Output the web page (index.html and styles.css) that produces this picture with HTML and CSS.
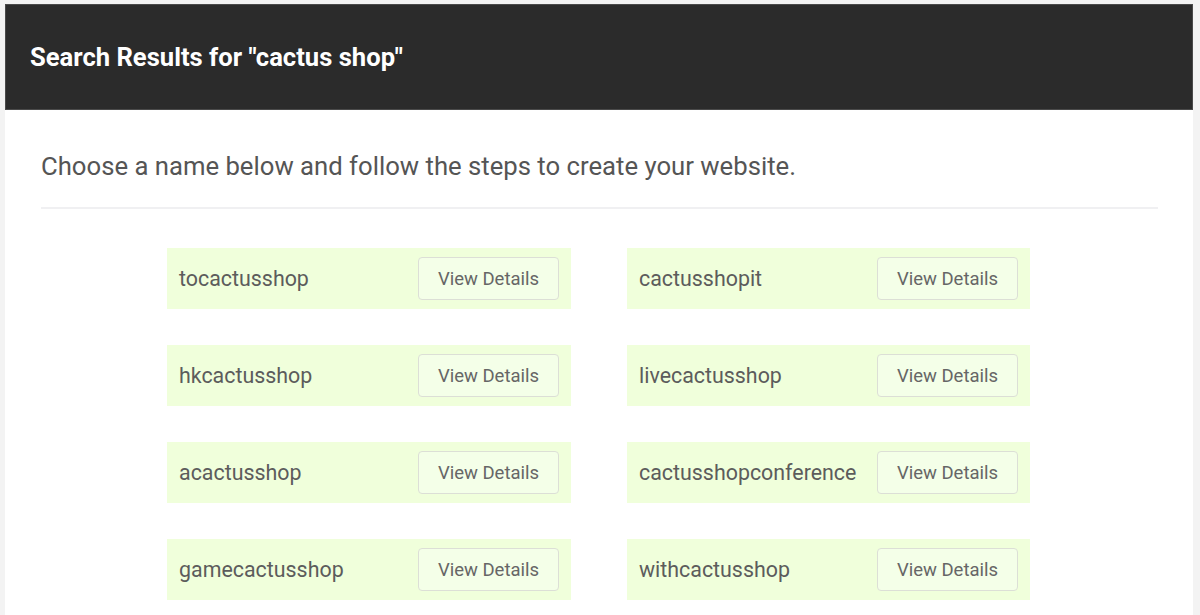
FILE: index.html
```html
<!DOCTYPE html>
<html lang="en">
<head>
    <meta charset="UTF-8">
    <meta name="viewport" content="width=device-width, initial-scale=1.0">
    <title>Search Results</title>
    <link rel="stylesheet" href="styles.css">
</head>
<body>
    <div class="panel">
        <div class="panel-header">
            <h1>Search Results for "cactus shop"</h1>
        </div>
        <div class="panel-body">
            <p class="intro">Choose a name below and follow the steps to create your website.</p>
            <div class="results">
                <div class="result"><span class="name">tocactusshop</span><button>View Details</button></div>
                <div class="result"><span class="name">cactusshopit</span><button>View Details</button></div>
                <div class="result"><span class="name">hkcactusshop</span><button>View Details</button></div>
                <div class="result"><span class="name">livecactusshop</span><button>View Details</button></div>
                <div class="result"><span class="name">acactusshop</span><button>View Details</button></div>
                <div class="result"><span class="name">cactusshopconference</span><button>View Details</button></div>
                <div class="result"><span class="name">gamecactusshop</span><button>View Details</button></div>
                <div class="result"><span class="name">withcactusshop</span><button>View Details</button></div>
            </div>
        </div>
    </div>
</body>
</html>
```

FILE: styles.css
```css
body {
    margin: 0;
    padding: 4px 7px 0 5px;
    background-color: #f3f3f3;
    font-family: Roboto, "Liberation Sans", sans-serif;
}

.panel {
    background-color: #fff;
    height: 611px;
    overflow: hidden;
}

.panel-header {
    background-color: #2b2b2b;
    height: 106px;
    box-sizing: border-box;
    border: 1px solid #4a4a4a;
    display: flex;
    align-items: center;
    padding-left: 24px;
}

.panel-header h1 {
    margin: 0;
    color: #fff;
    font-size: 25.6px;
    font-weight: bold;
}

.panel-body {
    padding: 0 35px 0 36px;
}

.intro {
    margin: 0;
    padding: 41px 0 26px 0;
    font-size: 25.7px;
    color: #555;
    border-bottom: 2px solid #f0f0f2;
}

/* сетка результатов */
.results {
    display: grid;
    grid-template-columns: 404px 403px;
    column-gap: 56px;
    row-gap: 36px;
    justify-content: start;
    padding: 39px 0 0 126px;
}

.result {
    background-color: #f0ffdb;
    height: 61px;
    display: flex;
    align-items: center;
    justify-content: space-between;
    padding: 0 12px;
}

.name {
    font-size: 21.4px;
    color: #5c5c5c;
}

button {
    width: 141px;
    height: 43px;
    font-family: Roboto, "Liberation Sans", sans-serif;
    font-size: 18.5px;
    color: #666;
    background-color: #f4ffe8;
    border: 1px solid #dcdfd6;
    border-radius: 4px;
    cursor: pointer;
}
```
